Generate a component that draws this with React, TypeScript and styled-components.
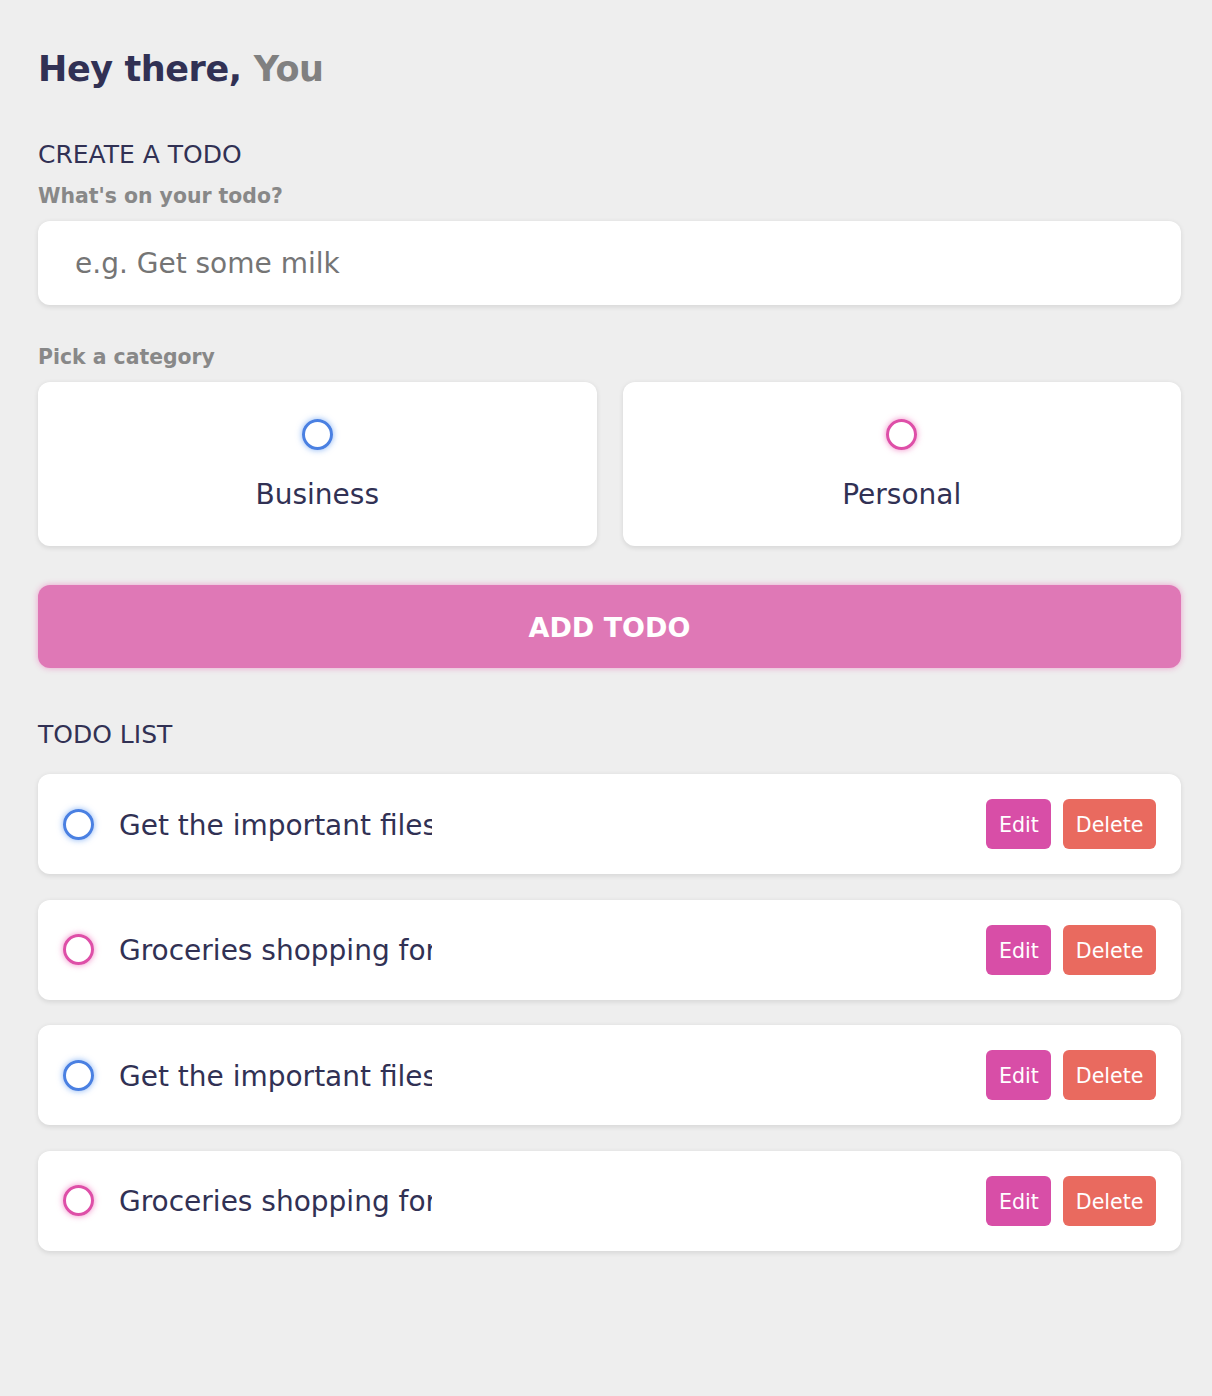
import React from "react";
import styled, { createGlobalStyle } from "styled-components";

const GlobalStyle = createGlobalStyle`
  * { margin: 0; padding: 0; box-sizing: border-box; }
  html, body { background: #eeeeee; min-height: 100%; }
  body { font-family: "DejaVu Sans", "Liberation Sans", sans-serif; color: #313154; }
`;

const Page = styled.main`
  min-height: 1396px;
  padding: 47px 31px 60px 38px;
  display: flex;
  flex-direction: column;
`;

const Greeting = styled.h2`
  display: flex;
  align-items: baseline;
  gap: 12px;
  font-size: 35px;
  line-height: 44px;
  font-weight: 700;
  letter-spacing: -0.4px;
  color: #313154;
`;

const Name = styled.span`
  color: #808080;
`;

const SectionTitle = styled.h3<{ $top: number }>`
  margin-top: ${(p) => p.$top}px;
  font-size: 25px;
  line-height: 30px;
  padding-top: 1px;
  height: 30px;
  font-weight: 400;
  color: #313154;
`;

const Label = styled.h4<{ $top: number }>`
  margin-top: ${(p) => p.$top}px;
  font-size: 20.4px;
  line-height: 24px;
  font-weight: 700;
  color: #888888;
`;

const TextInput = styled.div`
  margin-top: 13px;
  height: 84px;
  display: flex;
  align-items: center;
  padding: 0 37px;
  background: #ffffff;
  border-radius: 12px;
  box-shadow: 0 1.5px 5px rgba(0, 0, 0, 0.1);
  font-size: 28px;
  color: #757575;
`;

const Options = styled.div`
  margin-top: 13px;
  display: grid;
  grid-template-columns: 1fr 1fr;
  gap: 26px;
`;

const Option = styled.label`
  display: flex;
  flex-direction: column;
  align-items: center;
  padding: 37px;
  background: #ffffff;
  border-radius: 12px;
  box-shadow: 0 1.5px 5px rgba(0, 0, 0, 0.1);
`;

const Bubble = styled.span<{ $kind: "business" | "personal" }>`
  display: block;
  width: 31px;
  height: 31px;
  border-radius: 999px;
  border: 3px solid ${(p) => (p.$kind === "business" ? "#4a80e2" : "#de4fa8")};
  box-shadow: 0 0 6px
    ${(p) => (p.$kind === "business" ? "rgba(58,130,238,0.6)" : "rgba(234,64,164,0.6)")};
  flex-shrink: 0;
`;

const OptionText = styled.div`
  margin-top: 25px;
  padding-top: 3px;
  height: 34px;
  font-size: 28px;
  line-height: 34px;
  color: #313154;
`;

const AddButton = styled.button`
  margin-top: 39px;
  height: 83px;
  width: 100%;
  padding-top: 2px;
  border: none;
  border-radius: 12px;
  background: #df78b6;
  box-shadow: 0 0 6px rgba(234, 64, 164, 0.45);
  color: #ffffff;
  font-family: "DejaVu Sans", "Liberation Sans", sans-serif;
  font-size: 27px;
  font-weight: 700;
  text-transform: uppercase;
`;

const List = styled.div`
  margin-top: 25px;
  display: flex;
  flex-direction: column;
  gap: 25.5px;
`;

const Item = styled.div`
  display: flex;
  align-items: center;
  padding: 25px;
  background: #ffffff;
  border-radius: 12px;
  box-shadow: 0 1.5px 5px rgba(0, 0, 0, 0.1);
`;

const Content = styled.div`
  margin-left: 25px;
  flex: 1 1 0%;
  min-width: 0;
`;

const ContentText = styled.div`
  width: 313px;
  overflow: hidden;
  white-space: nowrap;
  padding-top: 3px;
  font-size: 28px;
  line-height: 34px;
  color: #313154;
`;

const Actions = styled.div`
  display: flex;
  align-items: center;
  gap: 12px;
`;

const ActionButton = styled.button<{ $variant: "edit" | "delete" }>`
  height: 50px;
  padding: 2px 12.5px 0;
  border: none;
  border-radius: 6px;
  background: ${(p) => (p.$variant === "edit" ? "#d84ea7" : "#e96a5f")};
  color: #ffffff;
  font-family: "DejaVu Sans", "Liberation Sans", sans-serif;
  font-size: 20.6px;
`;

type Todo = { text: string; kind: "business" | "personal" };

const todos: Todo[] = [
  { text: "Get the important files", kind: "business" },
  { text: "Groceries shopping for the week", kind: "personal" },
  { text: "Get the important files", kind: "business" },
  { text: "Groceries shopping for the week", kind: "personal" },
];

export default function App() {
  return (
    <>
      <GlobalStyle />
      <Page>
        <Greeting>
          Hey there,<Name>You</Name>
        </Greeting>

        <SectionTitle $top={48}>CREATE A TODO</SectionTitle>
        <Label $top={15}>What's on your todo?</Label>
        <TextInput>e.g. Get some milk</TextInput>

        <Label $top={40}>Pick a category</Label>
        <Options>
          <Option>
            <Bubble $kind="business" />
            <OptionText>Business</OptionText>
          </Option>
          <Option>
            <Bubble $kind="personal" />
            <OptionText>Personal</OptionText>
          </Option>
        </Options>

        <AddButton>Add todo</AddButton>

        <SectionTitle $top={51}>TODO LIST</SectionTitle>
        <List>
          {todos.map((t, i) => (
            <Item key={i}>
              <Bubble $kind={t.kind} />
              <Content>
                <ContentText>{t.text}</ContentText>
              </Content>
              <Actions>
                <ActionButton $variant="edit">Edit</ActionButton>
                <ActionButton $variant="delete">Delete</ActionButton>
              </Actions>
            </Item>
          ))}
        </List>
      </Page>
    </>
  );
}
